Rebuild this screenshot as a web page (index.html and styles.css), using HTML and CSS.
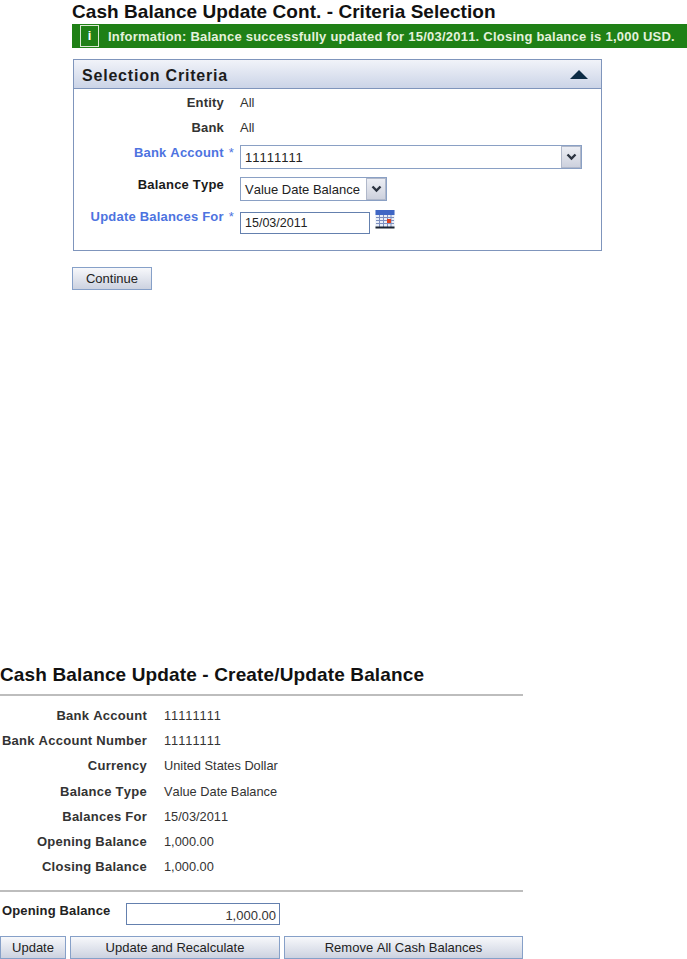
FILE: index.html
```html
<!DOCTYPE html>
<html lang="en">
<head>
<meta charset="utf-8">
<title>Cash Balance Update</title>
<link rel="stylesheet" href="styles.css">
</head>
<body>
<section class="criteria">
  <h1 class="title">Cash Balance Update Cont. - Criteria Selection</h1>
  <div class="notice">
    <span class="notice-icon">i</span>
    <span class="notice-text">Information: Balance successfully updated for 15/03/2011. Closing balance is 1,000 USD.</span>
  </div>
  <div class="panel">
    <div class="panel-head">
      <h2 class="panel-title">Selection Criteria</h2>
      <svg class="collapse" width="18" height="9" viewBox="0 0 18 9"><path d="M9 0 L18 9 L0 9 Z" fill="#0c2b45"/></svg>
    </div>
    <div class="panel-body">
      <div class="crow r-entity"><span class="clabel">Entity</span><span class="cvalue">All</span></div>
      <div class="crow r-bank"><span class="clabel">Bank</span><span class="cvalue">All</span></div>
      <div class="crow r-account">
        <span class="clabel req">Bank Account<span class="star">*</span></span>
        <div class="selectbox wide">
          <span class="select-text">11111111</span>
          <span class="arrow"><svg width="11" height="8" viewBox="0 0 11 8"><path d="M1.5 1.5 L5.5 5.5 L9.5 1.5" fill="none" stroke="#2b3340" stroke-width="2.4"/></svg></span>
        </div>
      </div>
      <div class="crow r-type">
        <span class="clabel dark">Balance Type</span>
        <div class="selectbox narrow">
          <span class="select-text">Value Date Balance</span>
          <span class="arrow"><svg width="11" height="8" viewBox="0 0 11 8"><path d="M1.5 1.5 L5.5 5.5 L9.5 1.5" fill="none" stroke="#2b3340" stroke-width="2.4"/></svg></span>
        </div>
      </div>
      <div class="crow r-date">
        <span class="clabel req">Update Balances For<span class="star">*</span></span>
        <input class="date" type="text" value="15/03/2011">
        <svg class="cal" width="20" height="20" viewBox="0 0 20 20">
          <rect x="0.5" y="1" width="19" height="18" fill="#e8eef8"/>
          <rect x="0.5" y="1" width="19" height="5" fill="#3f66c4"/>
          <path d="M1 8.5H19M1 11.5H19M1 14.5H19M4.5 6V18M8.5 6V18M12.5 6V18M16 6V18" stroke="#7d8fc0" stroke-width="1"/>
          <rect x="12" y="10" width="4" height="4" fill="#e0401f"/>
          <rect x="0.5" y="17.5" width="19" height="2" fill="#1b2433"/>
        </svg>
      </div>
    </div>
  </div>
  <button class="btn continue" type="button">Continue</button>
</section>

<section class="update">
  <h1 class="title">Cash Balance Update - Create/Update Balance</h1>
  <div class="details">
    <div class="drow"><span class="dlabel">Bank Account</span><span class="dvalue">11111111</span></div>
    <div class="drow"><span class="dlabel">Bank Account Number</span><span class="dvalue">11111111</span></div>
    <div class="drow"><span class="dlabel">Currency</span><span class="dvalue">United States Dollar</span></div>
    <div class="drow"><span class="dlabel">Balance Type</span><span class="dvalue">Value Date Balance</span></div>
    <div class="drow"><span class="dlabel">Balances For</span><span class="dvalue">15/03/2011</span></div>
    <div class="drow"><span class="dlabel">Opening Balance</span><span class="dvalue">1,000.00</span></div>
    <div class="drow"><span class="dlabel">Closing Balance</span><span class="dvalue">1,000.00</span></div>
  </div>
  <div class="opening">
    <span class="opening-label">Opening Balance</span>
    <input class="amount" type="text" value="1,000.00">
  </div>
  <div class="actions">
    <button class="btn b-update" type="button">Update</button>
    <button class="btn b-recalc" type="button">Update and Recalculate</button>
    <button class="btn b-remove" type="button">Remove All Cash Balances</button>
  </div>
</section>
</body>
</html>
```
FILE: styles.css
```css
* { box-sizing: border-box; }
html, body { margin: 0; padding: 0; }
body {
  width: 687px;
  height: 959px;
  overflow: hidden;
  background: #fff;
  font-family: "Liberation Sans", Arial, sans-serif;
  font-size: 13px;
  font-kerning: none;
  color: #333;
}
.title {
  margin: 0;
  font-size: 19px;
  line-height: 24px;
  font-weight: bold;
  color: #111;
  letter-spacing: 0.05px;
}
.criteria { padding-left: 72px; height: 664px; }
.notice {
  height: 24px;
  width: 615px;
  background: #1f8016;
  display: flex;
  align-items: center;
  padding-left: 8px;
  color: #e4f2dc;
  font-weight: bold;
  font-size: 13px;
  gap: 9px;
}
.notice-text { letter-spacing: 0.23px; }
.notice-icon {
  width: 19px;
  height: 22px;
  border: 1px solid #dbe9d3;
  text-align: center;
  line-height: 20px;
  color: #fff;
  flex: none;
}
.panel {
  margin: 11px 0 0 1px;
  width: 529px;
  height: 192px;
  border: 1px solid #7f95bc;
}
.panel-head {
  height: 29px;
  background: linear-gradient(#f1f3f9, #cbd4e7);
  border-bottom: 1px solid #7f95bc;
  display: flex;
  align-items: center;
  justify-content: space-between;
  padding: 0 13px 0 8px;
}
.panel-title { margin: 3px 0 0; font-size: 16px; font-weight: bold; color: #1c1c1c; letter-spacing: 0.8px; }
.panel-body { padding-top: 1px; }
.crow { display: flex; align-items: flex-start; }
.r-entity, .r-bank { height: 25px; line-height: 25px; }
.r-account { height: 32px; padding-top: 5px; }
.r-type { height: 32px; padding-top: 5px; }
.r-date { height: 32px; padding-top: 5px; }
.clabel {
  width: 150px;
  text-align: right;
  font-weight: bold;
  color: #333;
  margin-right: 16px;
  flex: none;
  letter-spacing: 0.2px;
}
.req { color: #4d73e0; }
.star { margin-left: 5px; margin-right: -10px; font-weight: normal; }
.dark { color: #1a1a1a; }
.r-account .clabel, .r-date .clabel, .r-type .clabel { line-height: 14px; padding-top: 1px; }
.cvalue { color: #333; }
.selectbox {
  display: flex;
  align-items: center;
  height: 24px;
  border: 1px solid #8aa0c4;
  background: #fff;
}
.wide { width: 342px; }
.narrow { width: 147px; }
.select-text { flex: 1; padding-left: 4px; color: #222; }
.arrow {
  width: 20px;
  height: 22px;
  background: linear-gradient(#eceef4, #cdd1dd);
  border: 1px solid #b0b8ca;
  display: flex;
  align-items: center;
  justify-content: center;
  flex: none;
}
.date {
  width: 130px;
  height: 22px;
  margin: 3px 5px 0 0;
  border: 1px solid #6480ae;
  padding: 0 4px;
  font: 12.5px "Liberation Sans", Arial, sans-serif;
  font-kerning: none;
  color: #222;
}
.btn {
  font: 13px "Liberation Sans", Arial, sans-serif;
  font-kerning: none;
  color: #222;
  height: 23px;
  padding: 0;
  border: 1px solid #86a0c8;
  background: linear-gradient(#f7f8fb, #ccd2e0);
  display: block;
}
.continue { width: 80px; margin-top: 16px; }
.update { width: 523px; }
.update .title { height: 30px; line-height: 22px; letter-spacing: 0.14px; }
.details {
  border-top: 2px solid #bdbdbd;
  border-bottom: 2px solid #bdbdbd;
  padding-top: 7px;
  height: 198px;
}
.drow { display: flex; height: 25.2px; line-height: 25.2px; }
.dlabel { width: 147px; margin-right: 17px; text-align: right; font-weight: bold; color: #333; letter-spacing: 0.26px; }
.dvalue { color: #333; font-size: 12.8px; }
.opening { display: flex; align-items: flex-start; margin-top: 11px; height: 33px; }
.opening-label { width: 126px; padding: 1px 0 0 2px; font-weight: bold; color: #222; line-height: 14px; letter-spacing: 0.15px; }
.amount {
  width: 154px;
  height: 22px;
  border: 1px solid #6480ae;
  text-align: right;
  padding: 2px 3px 0;
  font: 13px "Liberation Sans", Arial, sans-serif;
  font-kerning: none;
  color: #333;
}
.actions { display: flex; gap: 4px; }
.b-update { width: 66px; }
.b-recalc { width: 210px; }
.b-remove { width: 239px; }
```
